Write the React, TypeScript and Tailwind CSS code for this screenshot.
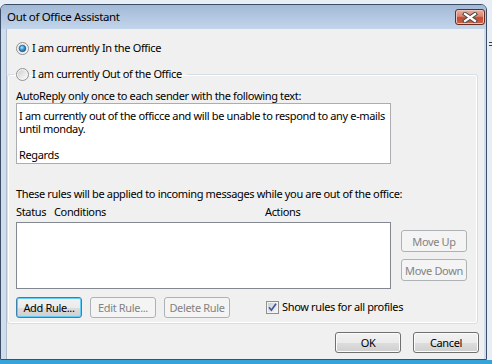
import React from 'react';

type BtnKind = 'normal' | 'focus' | 'disabled';

const btnStyles: Record<BtnKind, string> = {
    normal: 'border border-[#707070] bg-[linear-gradient(#f2f2f2_0%,#ebebeb_50%,#dddddd_51%,#cfcfcf_100%)] shadow-[inset_0_0_0_1px_#fcfcfc] text-black',
    focus: 'border border-[#3c7fb1] bg-[linear-gradient(#f2f2f2_0%,#ebebeb_50%,#dddddd_51%,#cfcfcf_100%)] shadow-[inset_0_0_0_1px_#62cdf6] text-black',
    disabled: 'border border-[#adb2b5] bg-[#f4f4f4] text-[#838383]',
};

const Btn: React.FC<{ kind?: BtnKind; tall?: boolean; children: React.ReactNode }> = ({ kind = 'normal', tall, children }) => (
    <div className={`w-[66px] ${tall ? 'h-[22px]' : 'h-[21px]'} rounded-[3px] flex items-center justify-center leading-none ${btnStyles[kind]}`}>
        {children}
    </div>
);

const Radio: React.FC<{ id: string; checked?: boolean }> = ({ id, checked }) => (
    <svg width="13" height="13" viewBox="0 0 13 13" className="shrink-0 mt-[2px]">
        <defs>
            <linearGradient id={`rf${id}`} x1="0" y1="0" x2="1" y2="1">
                <stop offset="0" stopColor="#cfcfcf" />
                <stop offset="1" stopColor="#fbfbfb" />
            </linearGradient>
            <radialGradient id={`rd${id}`} cx="0.4" cy="0.35" r="0.75">
                <stop offset="0" stopColor="#a6ecff" />
                <stop offset="0.45" stopColor="#3a9ad8" />
                <stop offset="1" stopColor="#124d87" />
            </radialGradient>
        </defs>
        <circle cx="6.5" cy="6.5" r="6" fill="#f6f6f6" stroke="#8e8f8f" />
        <circle cx="6.5" cy="6.5" r="4.6" fill={`url(#rf${id})`} />
        {checked && <circle cx="6.5" cy="6.5" r="3.3" fill={`url(#rd${id})`} stroke="#1a4c80" strokeWidth="0.6" />}
    </svg>
);

const Check = () => (
    <svg width="13" height="13" viewBox="0 0 13 13" className="shrink-0">
        <defs>
            <linearGradient id="cbf" x1="0" y1="0" x2="1" y2="1">
                <stop offset="0" stopColor="#cbcfd5" />
                <stop offset="1" stopColor="#f6f6f6" />
            </linearGradient>
        </defs>
        <rect x="0.5" y="0.5" width="12" height="12" fill="#f4f4f4" stroke="#8e8f8f" />
        <rect x="2" y="2" width="9" height="9" fill="url(#cbf)" />
        <path d="M3 6.3 L5.4 9.2 L10 2.8" stroke="#3f56a0" strokeWidth="1.7" fill="none" />
    </svg>
);

const CloseButton = () => (
    <div className="mt-[4px] mr-[1px] w-[30px] h-[16px] rounded-[3px] border border-[#6a2b21] bg-[linear-gradient(#eab1a3_0%,#d9826f_45%,#c24b33_55%,#cf6248_100%)] shadow-[inset_0_0_0_1px_#eec2b6] flex items-center justify-center">
        <svg width="16" height="11" viewBox="0 0 16 11">
            <path d="M3 2 L13 9 M13 2 L3 9" stroke="#4b4b4b" strokeWidth="4.2" strokeLinecap="square" />
            <path d="M3 2 L13 9 M13 2 L3 9" stroke="#ffffff" strokeWidth="2.2" strokeLinecap="square" />
        </svg>
    </div>
);

export default function App() {
    return (
        <div className="w-[492px] h-[364px] overflow-hidden bg-[#e8eef6] flex flex-col font-['Noto_Sans',sans-serif] text-[11px] tracking-[-0.35px] text-black">
            <div className="flex pt-[4px]">
                <div className="w-[487px] h-[356px] flex flex-col border border-[#3d4f66] rounded-t-[6px] overflow-hidden bg-[#cddbec]">
                    {/* title bar */}
                    <div className="h-[24px] flex items-start bg-[linear-gradient(#a2b9d6,#c2d5eb)]">
                        <div className="flex-1 h-[24px] flex items-center pl-[6px] text-[11.5px] leading-[16px]">Out of Office Assistant</div>
                        <CloseButton />
                    </div>

                    <div className="flex flex-1 min-h-0">
                        <div className="w-[6px] bg-[#d0ddec] border-r border-[#aebccc]" />

                        {/* client */}
                        <div className="flex-1 bg-[#f0f0f0] flex flex-col pt-[11px]">
                            <div className="h-[16px] flex items-start gap-[3px] pl-[9px] leading-[16px]">
                                <Radio id="a" checked />
                                <span>I am currently In the Office</span>
                            </div>

                            <fieldset className="mt-[10px] w-[471px] border border-[#d5dfe5] rounded-[3px] shadow-[inset_0_0_0_1px_#ffffff]">
                                <legend className="ml-[6px] pl-[2px] pr-[5px] h-[16px] flex items-start gap-[3px] leading-[16px]">
                                    <Radio id="b" />
                                    <span>I am currently Out of the Office</span>
                                </legend>

                                <div className="flex flex-col pl-[8px] pb-[5px]">
                                    <div className="mt-[6px] h-[15px] leading-[15px]">AutoReply only once to each sender with the following text:</div>
                                    <div className="w-[375px] h-[61px] border border-[#abadb3] bg-white pl-[2px] pt-[5px] leading-[13px] whitespace-nowrap overflow-hidden">
                                        <div className="h-[13px]">I am currently out of the officce and will be unable to respond to any e-mails</div>
                                        <div className="h-[13px]">until monday.</div>
                                        <div className="h-[13px]" />
                                        <div className="h-[13px]">Regards</div>
                                    </div>

                                    <div className="mt-[22px] h-[16px] leading-[16px]">These rules will be applied to incoming messages while you are out of the office:</div>
                                    <div className="mt-[2px] h-[16px] leading-[16px] flex">
                                        <span className="w-[38px]">Status</span>
                                        <span className="w-[211px]">Conditions</span>
                                        <span>Actions</span>
                                    </div>

                                    <div className="mt-[2px] flex">
                                        <div className="w-[375px] h-[67px] border border-[#828790] bg-white" />
                                        <div className="ml-[10px] pt-[8px] flex flex-col gap-[7px]">
                                            <Btn kind="disabled" tall>Move Up</Btn>
                                            <Btn kind="disabled" tall>Move Down</Btn>
                                        </div>
                                    </div>

                                    <div className="mt-[8px] h-[21px] flex items-center gap-[8px]">
                                        <Btn kind="focus">Add Rule...</Btn>
                                        <Btn kind="disabled">Edit Rule...</Btn>
                                        <Btn kind="disabled">Delete Rule</Btn>
                                        <div className="ml-[28px] flex items-center gap-[3px]">
                                            <Check />
                                            <span>Show rules for all profiles</span>
                                        </div>
                                    </div>
                                </div>
                            </fieldset>

                            <div className="mt-[8px] flex justify-end gap-[12px] pr-[5px]">
                                <Btn>OK</Btn>
                                <Btn>Cancel</Btn>
                            </div>
                        </div>

                        <div className="w-[2px] bg-[#d0ddec]" />
                    </div>
                </div>

                <div className="flex-1 pt-[38px] pl-[2px] flex flex-col gap-[2px]">
                    <div className="h-px bg-[#3a3a3a]" />
                    <div className="h-px bg-[#3a3a3a]" />
                </div>
            </div>
            <div className="flex-1 bg-[#34a4da]" />
        </div>
    );
}
